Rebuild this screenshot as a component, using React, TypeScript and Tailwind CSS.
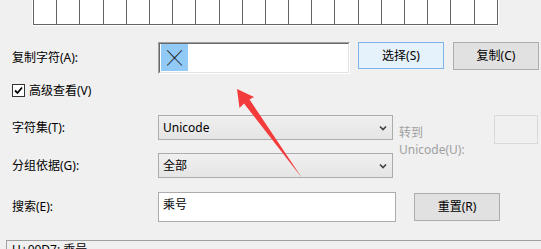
import React from 'react';

const cells = Array.from({ length: 20 });

function Chevron() {
  return (
    <svg width="8" height="6" viewBox="0 0 8 6" className="absolute right-[5px] top-1/2 -translate-y-1/2">
      <path d="M1 1.5 L4 4.5 L7 1.5" fill="none" stroke="#404040" strokeWidth="1.6" />
    </svg>
  );
}

function Select({ value, w }: { value: string; w: string }) {
  return (
    <div className={`relative h-[25px] ${w} border border-[#acacac] bg-gradient-to-b from-[#f0f0f0] to-[#e5e5e5] pl-[4px] text-[12px] leading-[23px] text-black`}>
      {value}
      <Chevron />
    </div>
  );
}

export default function App() {
  return (
    <div className="relative w-[541px] h-[249px] overflow-hidden bg-[#f0f0f0] text-[12px] text-black font-['Noto_Sans','Noto_Sans_CJK_SC',sans-serif]">
      {/* character grid (scrolled, only last row visible) */}
      <div className="ml-[32px] w-[467px] border-x border-b border-white">
        <div className="flex border-l border-[#646464]">
          {cells.map((_, i) => (
            <div key={i} className="w-[23.2px] h-[25px] border-r border-b border-[#646464] bg-white" />
          ))}
        </div>
      </div>

      {/* copy row */}
      <div className="mt-[16px] flex items-start">
        <div className="w-[158px] pl-[12px] self-center leading-[16px]">复制字符(A):</div>
        <div className="w-[192px] h-[32px] border-t border-l border-[#a0a0a0] border-b border-r border-b-white border-r-white">
          <div className="h-full border-t border-l border-[#696969] border-b border-r border-b-[#e3e3e3] border-r-[#e3e3e3] bg-white pl-[1px]">
            <div className="w-[27px] h-[27px] bg-[#91c9f7] flex items-center justify-center text-[36px] font-thin leading-[27px] text-[#1a1a1a]">
              ×
            </div>
          </div>
        </div>
        <button className="ml-[8px] w-[86px] h-[27px] border border-[#7eb4ea] bg-[#e5f1fb] text-[12px] leading-[25px]">
          选择(S)
        </button>
        <button className="ml-[9px] w-[86px] h-[28px] border border-[#adadad] bg-[#e1e1e1] text-[12px] leading-[26px]">
          复制(C)
        </button>
      </div>

      {/* advanced view */}
      <div className="mt-[10px] ml-[12px] flex items-center gap-[4px] h-[13px]">
        <div className="w-[13px] h-[13px] border border-[#333] bg-white flex items-center justify-center">
          <svg width="9" height="9" viewBox="0 0 9 9">
            <path d="M1 4.5 L3.5 7 L8 1.5" fill="none" stroke="#000" strokeWidth="1.8" />
          </svg>
        </div>
        <span className="leading-[16px]">高级查看(V)</span>
      </div>

      {/* charset / group */}
      <div className="mt-[18px] flex items-start">
        <div className="flex flex-col gap-[13px]">
          <div className="flex items-center">
            <div className="w-[158px] pl-[12px] leading-[16px]">字符集(T):</div>
            <Select value="Unicode" w="w-[235px]" />
          </div>
          <div className="flex items-center">
            <div className="w-[158px] pl-[12px] leading-[16px]">分组依据(G):</div>
            <Select value="全部" w="w-[235px]" />
          </div>
        </div>
        <div className="ml-[6px] mt-[9px] text-[#a0a0a0] leading-[17px]">
          <div>转到</div>
          <div>Unicode(U):</div>
        </div>
        <div className="ml-auto mr-[3px] w-[44px] h-[29px] border border-[#d9d9d9] bg-[#f0f0f0]" />
      </div>

      {/* search */}
      <div className="mt-[14px] flex items-start">
        <div className="w-[158px] pl-[12px] self-center leading-[16px]">搜索(E):</div>
        <div className="w-[238px] h-[30px] border border-[#acacac] bg-white pl-[4px] pt-[4px] leading-[16px]">乘号</div>
        <button className="ml-[18px] mt-[1px] w-[86px] h-[28px] border border-[#adadad] bg-[#e1e1e1] text-[12px] leading-[26px]">
          重置(R)
        </button>
      </div>

      {/* status bar */}
      <div className="mt-[18px] ml-[6px] border-t border-l border-[#a0a0a0] pl-[5px] pt-[1px] leading-[16px]">
        U+00D7: 乘号
      </div>

      {/* annotation arrow */}
      <svg className="absolute inset-0 pointer-events-none" width="541" height="249" viewBox="0 0 541 249">
        <polygon points="237,89 254,97 249.5,99.5 302,178 244,103.5 239.5,108" fill="#f33b3b" />
      </svg>
    </div>
  );
}
